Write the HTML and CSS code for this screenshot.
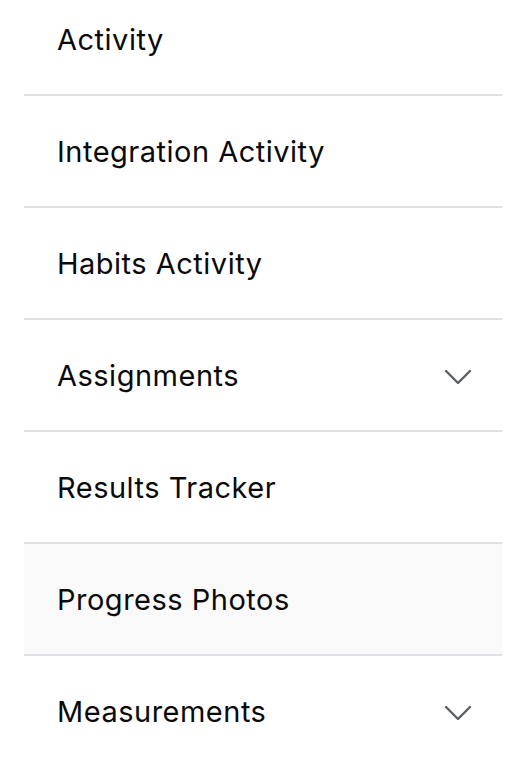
FILE: index.html
```html
<!DOCTYPE html>
<html>
<head>
<meta charset="utf-8">
<link rel="stylesheet" href="styles.css">
</head>
<body>
<ul class="menu">
  <li class="item"><span class="label">Activity</span></li>
  <li class="item"><span class="label">Integration Activity</span></li>
  <li class="item"><span class="label">Habits Activity</span></li>
  <li class="item"><span class="label">Assignments</span>
    <svg class="chev" width="28" height="16" viewBox="0 0 28 16"><path d="M2 2 L14 14 L26 2" fill="none" stroke="#5a5e6b" stroke-width="2.4" stroke-linecap="round" stroke-linejoin="round"/></svg>
  </li>
  <li class="item"><span class="label">Results Tracker</span></li>
  <li class="item active"><span class="label">Progress Photos</span></li>
  <li class="item"><span class="label">Measurements</span>
    <svg class="chev" width="28" height="16" viewBox="0 0 28 16"><path d="M2 2 L14 14 L26 2" fill="none" stroke="#5a5e6b" stroke-width="2.4" stroke-linecap="round" stroke-linejoin="round"/></svg>
  </li>
</ul>
</body>
</html>
```
FILE: styles.css
```css
html, body {
  margin: 0;
  padding: 0;
  background: #ffffff;
  overflow: hidden;
}
.menu {
  list-style: none;
  margin: -16px 26px 0 24px;
  padding: 0;
}
.item {
  display: flex;
  align-items: center;
  justify-content: space-between;
  height: 110px;
  border-bottom: 2px solid #dfe0e6;
  padding: 0 30px 0 33px;
  font-family: "Inter", sans-serif;
  font-size: 29px;
  font-weight: 400;
  letter-spacing: 0.5px;
  color: #0a0a0a;
}
.item.active {
  background: #f9f9f9;
}
.chev {
  display: block;
  margin-top: 4px;
}
```
